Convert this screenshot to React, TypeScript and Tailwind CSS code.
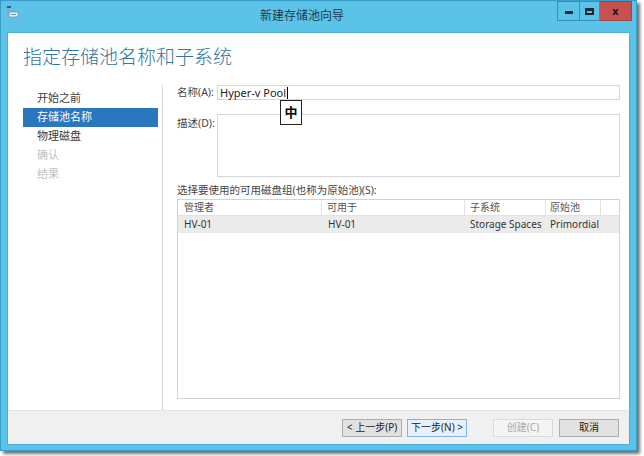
const ui = { fontFamily: '"Noto Sans", "Noto Sans CJK SC", sans-serif' };

const steps = [
  { label: "开始之前", state: "normal" },
  { label: "存储池名称", state: "active" },
  { label: "物理磁盘", state: "normal" },
  { label: "确认", state: "disabled" },
  { label: "结果", state: "disabled" },
];

function WindowIcon() {
  return (
    <svg width="13" height="14" viewBox="0 0 13 14">
      <rect x="1" y="1" width="4" height="2" fill="#2f5f8a" />
      <rect x="1" y="3" width="2" height="9" fill="#8aa9c4" />
      <rect x="3" y="7" width="9" height="5" rx="1" fill="#e8f0f6" stroke="#6d8fae" strokeWidth="0.8" />
      <rect x="5" y="9" width="5" height="1" fill="#6d8fae" />
    </svg>
  );
}

function TitleBar() {
  return (
    <div className="relative flex h-[31px] items-start">
      <div className="pl-[5px] pt-[4px]">
        <WindowIcon />
      </div>
      <div className="flex-1 pl-[28px] pt-[6px] text-center text-[12px] text-[#1d3b4c]">新建存储池向导</div>
      <div className="mr-[4px] flex h-[20px]">
        <div className="flex w-[22px] items-center justify-center border border-r-0 border-[#3b8fb5] bg-[#5cc3e8]">
          <div className="mt-[3px] h-[3px] w-[8px] bg-[#1c2a33]" />
        </div>
        <div className="flex w-[21px] items-center justify-center border border-[#3b8fb5] bg-[#5cc3e8]">
          <div className="h-[7px] w-[9px] border-2 border-t-[3px] border-[#1c2a33]" />
        </div>
        <div className="flex w-[32px] items-center justify-center border border-l-0 border-[#a64343] bg-[#c75050] text-[11px] font-bold text-[#2a1010]">
          x
        </div>
      </div>
    </div>
  );
}

function Nav() {
  return (
    <div className="flex w-[155px] flex-col border-r border-[#d8d8d8] pl-[15px] pr-[4px] pt-[4px]">
      {steps.map((s) => (
        <div
          key={s.label}
          className={
            "flex h-[19px] items-center pl-[14px] text-[11px] " +
            (s.state === "active"
              ? "bg-[#2a76bf] text-white"
              : s.state === "disabled"
              ? "text-[#c2c2c2]"
              : "text-[#3c3c3c]")
          }
        >
          {s.label}
        </div>
      ))}
    </div>
  );
}

function Table() {
  return (
    <div className="h-[200px] border border-[#d2d2d2] bg-white text-[10px] text-[#333]">
      <div className="grid grid-cols-[144px_143px_81px_55px_1fr] border-b border-[#e2e2e2]">
        <div className="h-[15px] border-r border-[#e2e2e2] pl-[6px] leading-[15px] text-[#555]">管理者</div>
        <div className="h-[15px] border-r border-[#e2e2e2] pl-[5px] leading-[15px] text-[#555]">可用于</div>
        <div className="h-[15px] border-r border-[#e2e2e2] pl-[5px] leading-[15px] text-[#555]">子系统</div>
        <div className="h-[15px] border-r border-[#e2e2e2] pl-[4px] leading-[15px] text-[#555]">原始池</div>
        <div />
      </div>
      <div className="grid h-[17px] grid-cols-[144px_143px_81px_55px_1fr] items-center bg-[#ebebeb]">
        <div className="pl-[6px]">HV-01</div>
        <div className="pl-[6px]">HV-01</div>
        <div className="whitespace-nowrap pl-[5px]">Storage Spaces</div>
        <div className="pl-[4px]">Primordial</div>
        <div />
      </div>
    </div>
  );
}

function Button({ children, variant }: { children: React.ReactNode; variant?: "primary" | "disabled" }) {
  const cls =
    variant === "primary"
      ? "border-[#7eb4ea] bg-[#e5f1fb] text-[#222]"
      : variant === "disabled"
      ? "border-[#d9d9d9] bg-[#f4f4f4] text-[#a8a8a8]"
      : "border-[#adadad] bg-[#e1e1e1] text-[#222]";
  return (
    <div className={"flex h-[18px] w-[60px] items-center justify-center border text-[10px] " + cls}>{children}</div>
  );
}

function Content() {
  return (
    <div className="flex h-full flex-col bg-white">
      <div className="pl-[15px] pt-[10px] text-[19px] font-light leading-[28px] text-[#3573a0]">指定存储池名称和子系统</div>
      <div className="flex flex-1 pt-[14px]">
        <Nav />
        <div className="flex flex-1 flex-col pl-[14px] pr-[9px] text-[10.5px] text-[#444]">
          <div className="flex items-center">
            <div className="w-[40px]">名称(A):</div>
            <div className="relative flex h-[15px] flex-1 items-center border border-[#d6d6d6] pl-[2px] text-[11px] text-[#222]">
              <span>Hyper-v Pool</span>
              <span className="ml-[1px] h-[12px] w-[1px] bg-black" />
              <div className="absolute left-[62px] top-[14px] flex h-[25px] w-[22px] items-center justify-center border-[1.5px] border-[#222] bg-white text-[13px] font-bold text-black">
                中
              </div>
            </div>
          </div>
          <div className="mt-[13px] flex items-start">
            <div className="w-[40px] pt-[2px]">描述(D):</div>
            <div className="h-[63px] flex-1 border border-[#d6d6d6]" />
          </div>
          <div className="mt-[6px] h-[15px]">选择要使用的可用磁盘组(也称为原始池)(S):</div>
          <div className="mt-[1px]">
            <Table />
          </div>
        </div>
      </div>
      <div className="flex h-[34px] items-center justify-end border-t border-[#e6e6e6] bg-[#f0f0f0] pr-[10px]">
        <div className="flex gap-[5px]">
          <Button>&lt; 上一步(P)</Button>
          <Button variant="primary">下一步(N) &gt;</Button>
        </div>
        <div className="ml-[26px] flex gap-[6px]">
          <Button variant="disabled">创建(C)</Button>
          <Button>取消</Button>
        </div>
      </div>
    </div>
  );
}

export default function App() {
  return (
    <div className="h-[456px] w-[644px] bg-white" style={ui}>
      <div className="flex h-[451px] w-[637px] flex-col border border-[#3a9cc8] bg-[#5cc3e8] shadow-[3px_3px_3px_rgba(0,0,0,0.55)]">
        <TitleBar />
        <div className="mx-[6px] mb-[5px] flex-1 border border-[#4aaed6]">
          <Content />
        </div>
      </div>
    </div>
  );
}
